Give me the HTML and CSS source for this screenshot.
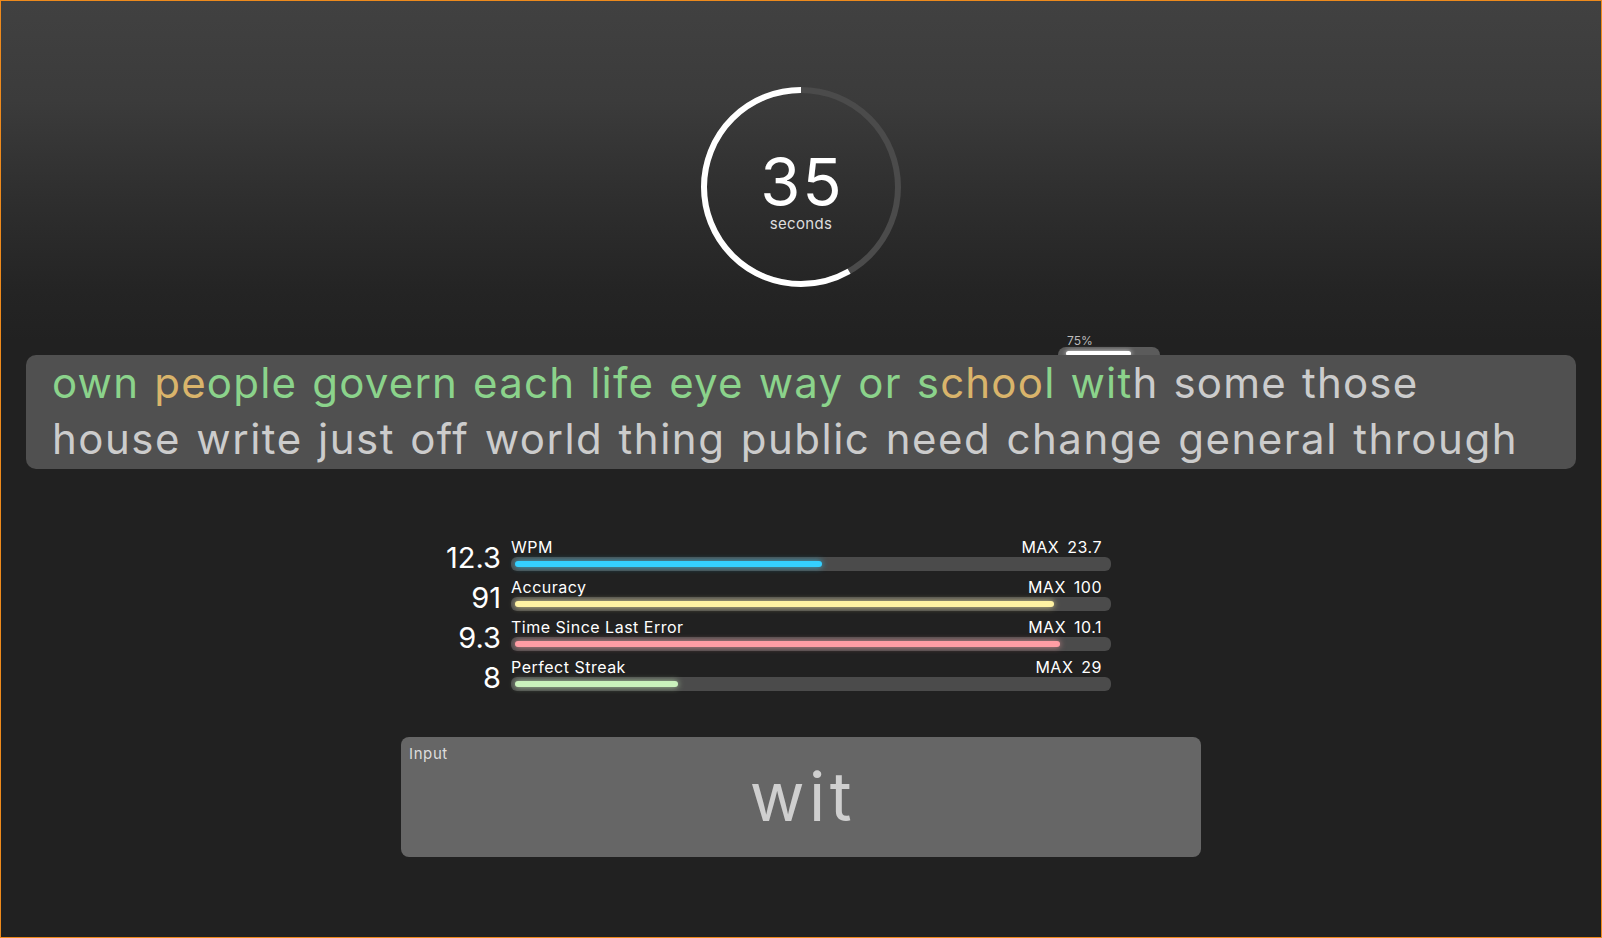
FILE: index.html
```html
<!DOCTYPE html>
<html lang="en">
<head>
<meta charset="utf-8">
<title>Typing test</title>
<link rel="stylesheet" href="styles.css">
</head>
<body>
<div class="page">
  <div class="timer">
    <svg class="ring" width="200" height="200" viewBox="0 0 200 200">
      <circle cx="100" cy="100" r="97" fill="none" stroke="#4b4b4b" stroke-width="6"/>
      <circle cx="100" cy="100" r="97" fill="none" stroke="#ffffff" stroke-width="6"
        stroke-dasharray="355.53 609.47" stroke-dashoffset="-253.95" transform="rotate(-90 100 100)"/>
    </svg>
    <div class="timer-text">
      <div class="secs">35</div>
      <div class="unit">seconds</div>
    </div>
  </div>

  <div class="words-wrap">
    <div class="progress">
      <span class="progress-label">75%</span>
      <div class="progress-track"><div class="progress-fill"></div></div>
    </div>
    <div class="words">
      <div class="line"><span class="ok">own</span> <span class="err">pe</span><span class="ok">ople</span> <span class="ok">govern</span> <span class="ok">each</span> <span class="ok">life</span> <span class="ok">eye</span> <span class="ok">way</span> <span class="ok">or</span> <span class="ok">s</span><span class="err">choo</span><span class="ok">l</span> <span class="ok">wit</span><span class="todo">h</span> <span class="todo">some</span> <span class="todo">those</span></div>
      <div class="line line-2 todo">house write just off world thing public need change general through</div>
    </div>
  </div>

  <div class="stats">
    <div class="stat">
      <div class="num">12.3</div>
      <div class="bar-col">
        <div class="bar-head"><span>WPM</span><span class="max">MAX<span class="max-val">23.7</span></span></div>
        <div class="track"><div class="fill fill-blue" style="width:51.9%"></div></div>
      </div>
    </div>
    <div class="stat">
      <div class="num">91</div>
      <div class="bar-col">
        <div class="bar-head"><span>Accuracy</span><span class="max">MAX<span class="max-val">100</span></span></div>
        <div class="track"><div class="fill fill-yellow" style="width:91%"></div></div>
      </div>
    </div>
    <div class="stat">
      <div class="num">9.3</div>
      <div class="bar-col">
        <div class="bar-head"><span>Time Since Last Error</span><span class="max">MAX<span class="max-val">10.1</span></span></div>
        <div class="track"><div class="fill fill-pink" style="width:92.1%"></div></div>
      </div>
    </div>
    <div class="stat">
      <div class="num">8</div>
      <div class="bar-col">
        <div class="bar-head"><span>Perfect Streak</span><span class="max">MAX<span class="max-val">29</span></span></div>
        <div class="track"><div class="fill fill-green" style="width:27.6%"></div></div>
      </div>
    </div>
  </div>

  <div class="input-box">
    <div class="input-label">Input</div>
    <div class="input-value">wit</div>
  </div>
</div>
</body>
</html>
```

FILE: styles.css
```css
* { box-sizing: border-box; }

html, body {
  margin: 0;
  padding: 0;
  background: #212121;
}

body {
  font-family: "Inter", "Liberation Sans", sans-serif;
  color: #ffffff;
}

.page {
  width: 1602px;
  height: 938px;
  border: 1px solid #ee8a1c;
  background: linear-gradient(to bottom, #414141 0px, #3b3b3b 100px, #2e2e2e 200px, #242424 290px, #212121 340px, #212121 100%);
  padding-top: 86px;
  overflow: hidden;
}

/* timer */
.timer {
  width: 200px;
  height: 200px;
  margin: 0 auto;
  display: grid;
}
.timer > * { grid-area: 1 / 1; }
.ring { display: block; }
.timer-text {
  display: flex;
  flex-direction: column;
  align-items: center;
  padding-top: 62px;
}
.secs {
  font-size: 65px;
  line-height: 65px;
  font-weight: 400;
  letter-spacing: 2px;
  padding-left: 2px;
  color: #ffffff;
}
.unit {
  font-size: 15px;
  line-height: 16px;
  margin-top: 2px;
  letter-spacing: 0.3px;
  color: #dddddd;
}

/* words */
.words-wrap {
  position: relative;
  margin: 70px 25px 0 25px;
}
.progress {
  position: absolute;
  left: 1032px;
  top: -8px;
  width: 102px;
}
.progress-label {
  position: absolute;
  left: 9px;
  top: -12px;
  font-size: 12px;
  line-height: 12px;
  color: #bbbbbb;
}
.progress-track {
  height: 18px;
  border-radius: 8px;
  background: #5b5b5b;
  padding: 4px 0 0 8px;
}
.progress-fill {
  width: 65px;
  height: 5px;
  border-radius: 3px;
  background: #ffffff;
  box-shadow: 0 0 5px rgba(255,255,255,0.8);
}
.words {
  position: relative;
  z-index: 1;
  height: 114px;
  background: #505050;
  border-radius: 10px;
  padding: 0 26px;
  font-size: 42px;
  line-height: 56px;
  letter-spacing: 1.2px;
  word-spacing: 2px;
  white-space: nowrap;
}
.line:first-child { margin-top: -2px; }
.line-2 { letter-spacing: 1.5px; }
.ok { color: #8bd38b; }
.err { color: #d9b46b; }
.todo { color: #cccccc; }

/* stats */
.stats {
  width: 800px;
  margin: 69px auto 0 auto;
  display: flex;
  flex-direction: column;
  gap: 7px;
}
.stat {
  display: flex;
  align-items: flex-end;
}
.num {
  width: 100px;
  margin-right: 10px;
  margin-bottom: -1px;
  text-align: right;
  font-size: 29px;
  line-height: 29px;
  color: #ffffff;
}
.bar-col { width: 600px; }
.bar-head {
  display: flex;
  justify-content: space-between;
  height: 18px;
  font-size: 16px;
  line-height: 18px;
  padding-right: 9px;
  padding-left: 0;
  letter-spacing: 0.5px;
  color: #ffffff;
}
.max-val { margin-left: 8px; }
.track {
  margin-top: 1px;
  height: 14px;
  border-radius: 6px;
  background: #4b4b4b;
  padding: 4px;
}
.fill {
  height: 6px;
  border-radius: 3px;
}
.fill-blue { background: #35d0ff; box-shadow: 0 0 6px rgba(53,208,255,0.8); }
.fill-yellow { background: #fff3a3; box-shadow: 0 0 6px rgba(255,243,163,0.8); }
.fill-pink { background: #ff9da4; box-shadow: 0 0 6px rgba(255,157,164,0.8); }
.fill-green { background: #caf2bd; box-shadow: 0 0 6px rgba(202,242,189,0.8); }

/* input */
.input-box {
  width: 800px;
  height: 120px;
  margin: 46px auto 0 auto;
  background: #666666;
  border-radius: 8px;
  padding: 9px 8px 0 8px;
}
.input-label {
  font-size: 15px;
  line-height: 16px;
  color: #dddddd;
  letter-spacing: 0.6px;
}
.input-value {
  margin-top: 3px;
  text-align: center;
  font-size: 67px;
  line-height: 64px;
  letter-spacing: 4.5px;
  padding-left: 4px;
  color: #cfcfcf;
}
```
